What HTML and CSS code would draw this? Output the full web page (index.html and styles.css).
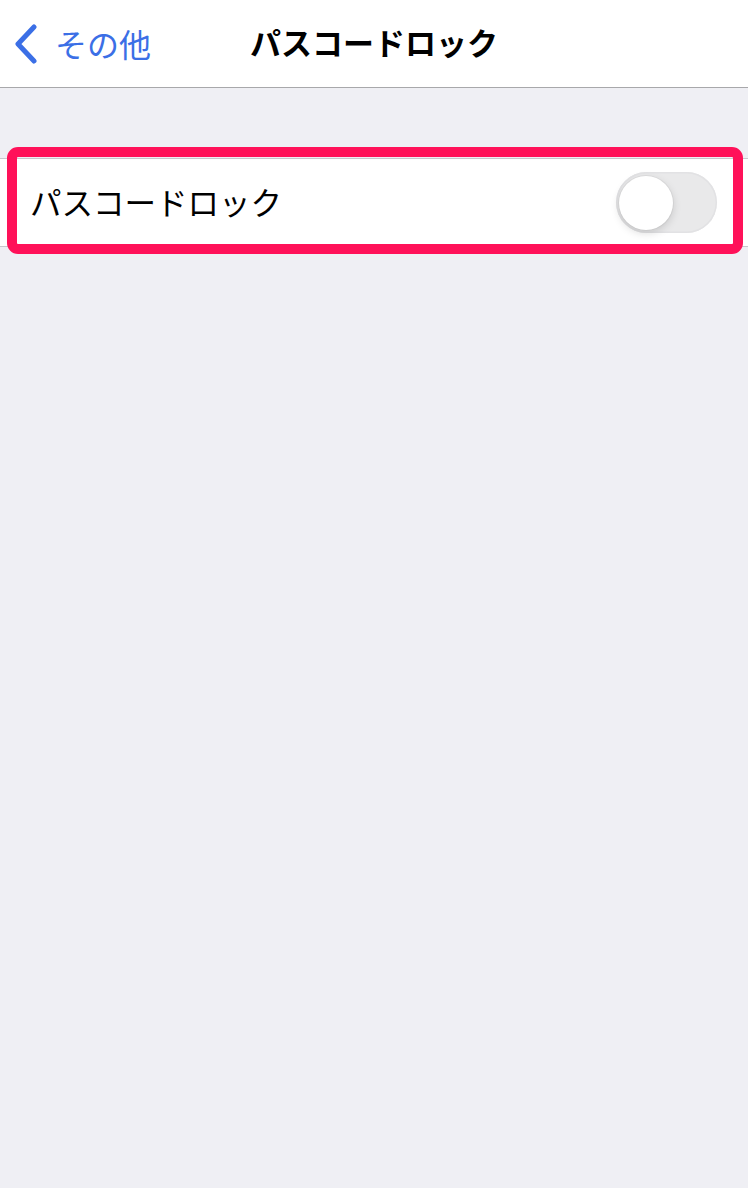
FILE: index.html
```html
<!DOCTYPE html>
<html lang="ja">
<head>
<meta charset="utf-8">
<link rel="stylesheet" href="styles.css">
</head>
<body>
<header class="nav">
  <div class="back">
    <svg class="chev" width="26" height="40" viewBox="0 0 26 40"><path d="M21 3 L5 20 L21 37" fill="none" stroke="#3b6fe6" stroke-width="5" stroke-linecap="round" stroke-linejoin="round"/></svg>
    <span class="back-text">その他</span>
  </div>
  <div class="title">パスコードロック</div>
</header>
<main class="content">
  <div class="group">
    <div class="cell">
      <span class="label">パスコードロック</span>
      <div class="switch"><div class="knob"></div></div>
    </div>
    <div class="highlight"></div>
  </div>
</main>
</body>
</html>
```
FILE: styles.css
```css
html, body {
  margin: 0;
  padding: 0;
}
body {
  width: 748px;
  height: 1188px;
  background: #efeff4;
  font-family: "Noto Sans CJK JP", "Noto Sans", sans-serif;
  overflow: hidden;
}
.nav {
  position: relative;
  height: 88px;
  background: #ffffff;
  border-bottom: 1px solid #a8a8ab;
  box-sizing: border-box;
  display: flex;
  align-items: center;
  justify-content: center;
}
.back {
  position: absolute;
  left: 13px;
  top: 0;
  height: 88px;
  display: flex;
  align-items: center;
  gap: 16px;
}
.back-text {
  color: #3b6fe6;
  font-size: 32px;
  line-height: 40px;
  margin-top: -3px;
}
.title {
  font-size: 31px;
  font-weight: 700;
  color: #000;
  line-height: 40px;
  margin-top: -3px;
}
.content {
  padding-top: 70px;
}
.group {
  position: relative;
}
.cell {
  height: 87px;
  background: #fff;
  border-top: 1px solid #c8c7cc;
  border-bottom: 1px solid #c8c7cc;
  display: flex;
  align-items: center;
  justify-content: space-between;
  padding: 0 31px 0 30px;
}
.label {
  font-size: 31.5px;
  color: #000;
  line-height: 40px;
  margin-top: -4px;
}
.switch {
  width: 101px;
  height: 61px;
  border-radius: 31px;
  background: #e9e9ea;
  box-shadow: inset 0 0 0 1.5px #e2e2e4;
  position: relative;
  flex: none;
}
.knob {
  position: absolute;
  left: 3px;
  top: 4px;
  width: 54px;
  height: 54px;
  border-radius: 50%;
  background: #fff;
  box-shadow: 0 3px 8px rgba(0,0,0,0.15), 0 0 0 1px rgba(0,0,0,0.04);
}
.highlight {
  position: absolute;
  left: 7px;
  right: 5px;
  top: -11px;
  bottom: -7px;
  border: 10px solid #ff1159;
  border-radius: 11px;
}
```
